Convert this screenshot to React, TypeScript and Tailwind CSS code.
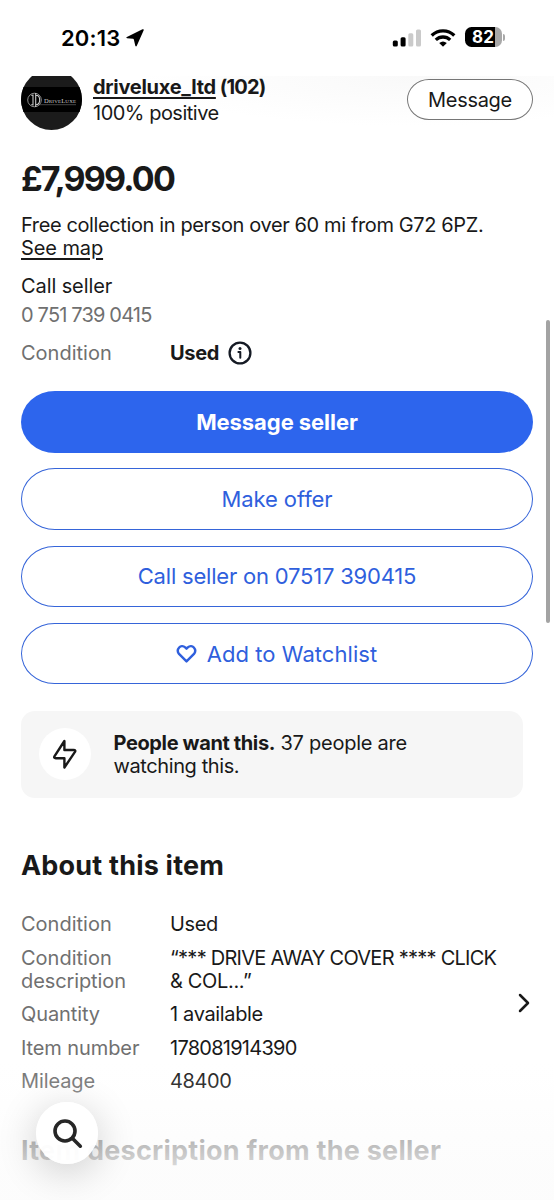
import type { ReactNode } from "react";

type Detail = {
  label: string;
  value: string;
  tracking: string;
};

const details: Detail[] = [
  { label: "Quantity", value: "1 available", tracking: "tracking-[-0.35px]" },
  { label: "Item number", value: "178081914390", tracking: "tracking-[-0.75px]" },
  { label: "Mileage", value: "48400", tracking: "tracking-[-0.4px]" },
];

function StatusBar() {
  return (
    <header className="flex h-[76px] items-start justify-between pt-[26px] pr-[49px] pl-[61px]">
      <div className="flex items-center">
        <span className="text-[22px] leading-[24px] font-semibold tracking-[0.15px] text-black">20:13</span>
        <svg className="ml-[6px] h-[18px] w-[18px]" viewBox="0 0 18 18">
          <path d="M17.7 1.2L10.8 16.8Q10 18 9.3 16.7L7.9 10.7Q7.7 10 7 9.8L1 9.2Q-.4 8.7 .9 7.9L16.5 .3Q18.1 -.2 17.7 1.2Z" fill="#000" />
        </svg>
      </div>
      <div className="flex items-center pt-px">
        <svg className="h-[19px] w-[30px]" viewBox="0 0 30 19">
          <rect x="0.8" y="12.5" width="5" height="6" rx="1.5" fill="#000" />
          <rect x="8.6" y="9.3" width="5" height="9.2" rx="1.5" fill="#000" />
          <rect x="16.3" y="5.2" width="5" height="13.3" rx="1.5" fill="#cacaca" />
          <rect x="24" y="1.5" width="5" height="17" rx="1.5" fill="#cacaca" />
        </svg>
        <svg className="ml-[8px] h-[19px] w-[26px]" viewBox="0 0 26 19" fill="none" stroke="#000" strokeWidth="3.3">
          <path d="M1.7 7.5 C8 1.3 18 1.3 24.3 7.5" />
          <path d="M5.8 11.9 C10 8 16 8 20.2 11.9" />
          <path d="M9.2 14.9 Q13 11.9 16.8 14.9 L13.5 18.2 Q13 18.6 12.5 18.2Z" fill="#000" stroke="none" />
        </svg>
        <div className="ml-[9px] flex items-center">
          <div className="flex h-[20px] w-[37px] items-center overflow-hidden rounded-[6.5px] bg-[linear-gradient(90deg,#000_30px,#a8a8a8_30px)] pl-[7px]">
            <span className="text-[17px] leading-[20px] font-bold tracking-[0.1px] text-white">82</span>
          </div>
          <span className="ml-[1px] h-[7px] w-[2px] rounded-r-full bg-[#a8a8a8]" />
        </div>
      </div>
    </header>
  );
}

function SellerAvatar() {
  return (
    <svg className="-mt-[7px] h-[61px] w-[61px] shrink-0" viewBox="0 0 61 61">
      <clipPath id="avatar">
        <circle cx="30.5" cy="30.5" r="30.5" />
      </clipPath>
      <g clipPath="url(#avatar)">
        <rect width="61" height="61" fill="#1b1b1b" />
        <rect y="18" width="61" height="25" fill="#000" />
        <g fill="none" stroke="#c9c9c9">
          <circle cx="13.5" cy="31" r="6.8" strokeWidth=".7" />
          <path d="M12 25.5V36.5M14.7 24V38M14.7 26.3C20 26.3 20 35.7 14.7 35.7M12 26.3H10.2M12 35.7H10.2" strokeWidth="1.1" />
          <path d="M18 35.7H55" strokeWidth=".5" stroke="#8a8a8a" />
        </g>
        <text x="23" y="33.6" fill="#cfcfcf" fontFamily="Liberation Serif, serif" fontSize="6.5" textLength="32">
          D<tspan fontSize="5">RIVE</tspan>L<tspan fontSize="5">UXE</tspan>
        </text>
      </g>
    </svg>
  );
}

function OutlineButton({ children }: { children: ReactNode }) {
  return (
    <button className="flex h-[61.5px] items-center justify-center rounded-[34px/31px] border-[1.4px] border-[#3665d9] pt-px text-[22px] text-[#2f5fdd]">
      {children}
    </button>
  );
}

export default function App() {
  return (
    <div className="relative h-[1200px] w-[554px] overflow-hidden bg-white font-[Inter,sans-serif] text-[20px] leading-[23px] text-[#191919]">
      <StatusBar />

      {/* seller row, scrolled partly under the status bar */}
      <section className="flex h-[84px] items-start overflow-hidden bg-[radial-gradient(ellipse_270px_50px_at_410px_0px,#f9f9f9,#fff)] pr-[21px] pl-[21px]">
        <SellerAvatar />
        <div className="ml-[11px] flex-1">
          <p className="font-bold whitespace-nowrap">
            <span className="tracking-[-0.28px] underline decoration-2 underline-offset-[3px]">driveluxe_ltd</span>
            <span className="tracking-[-0.8px]"> (102)</span>
          </p>
          <p className="mt-[3px] tracking-[-0.5px]">100% positive</p>
        </div>
        <button className="mt-[3px] flex h-[41px] w-[126px] items-center justify-center rounded-[22px/20.5px] border border-[#767676] bg-white pt-px tracking-[-0.3px]">
          Message
        </button>
      </section>

      <main className="pr-[21px] pl-[21px]">
        <h1 className="text-[34px] leading-[38px] font-bold tracking-[-1.85px]">£7,999.00</h1>
        <p className="mt-[16px] tracking-[-0.38px] whitespace-nowrap">Free collection in person over 60 mi from G72 6PZ.</p>
        <p className="tracking-[-0.1px] underline decoration-[1.5px] underline-offset-[3px]">See map</p>
        <p className="mt-[15px] tracking-[-0.1px]">Call seller</p>
        <p className="mt-[6px] tracking-[-0.83px] text-[#707070]">0 751 739 0415</p>
        <div className="mt-[15px] flex items-center">
          <span className="w-[149px] text-[#707070]">Condition</span>
          <span className="font-bold tracking-[-0.3px]">Used</span>
          <svg className="-mt-[5px] -mb-[3px] ml-[9px] h-[24px] w-[24px]" viewBox="0 0 24 24">
            <circle cx="12" cy="12" r="10.4" fill="none" stroke="#151a24" strokeWidth="2.3" />
            <circle cx="12" cy="7.6" r="1.5" fill="#151a24" />
            <path d="M10.4 11H12.3V16.8" fill="none" stroke="#151a24" strokeWidth="2" strokeLinecap="round" strokeLinejoin="round" />
          </svg>
        </div>

        <div className="mt-[26px] flex flex-col gap-[15.8px]">
          <button className="flex h-[61.5px] items-center justify-center rounded-[34px/31px] bg-[#2d65ed] pt-px text-[22px] font-bold tracking-[-0.07px] text-white">
            Message seller
          </button>
          <OutlineButton>
            <span className="tracking-[-0.1px]">Make offer</span>
          </OutlineButton>
          <OutlineButton>
            <span className="tracking-[-0.2px]">Call seller on 07517 390415</span>
          </OutlineButton>
          <OutlineButton>
            <svg className="mr-[10px] h-[20px] w-[21px]" viewBox="0 0 21 20" fill="none" stroke="#2f5fdd" strokeWidth="2.4" strokeLinejoin="round">
              <path d="M10.5 17.4 L3 9.9 C-.4 5.7 4.8 -.6 9.2 3.4 L10.5 4.7 L11.8 3.4 C16.2 -.6 21.4 5.7 18 9.9Z" />
            </svg>
            <span className="mr-px tracking-[0.05px]">Add to Watchlist</span>
          </OutlineButton>
        </div>

        <div className="mt-[26.6px] flex h-[87px] w-[502px] items-center rounded-[14px] bg-[#f6f6f6] pl-[18px]">
          <div className="flex h-[52px] w-[52px] items-center justify-center rounded-full bg-white">
            <svg className="h-[32px] w-[24px]" viewBox="0 0 24 32" fill="none" stroke="#191919" strokeWidth="2.4" strokeLinejoin="round">
              <path d="M10.8 20.2H2.8Q.4 20.2 1.6 18.2L11.4 3V12H20.6Q23.2 12 21.8 14.2L11.4 29.5V20.2Z" />
            </svg>
          </div>
          <p className="ml-[22.5px] pt-px tracking-[-0.25px]">
            <b className="tracking-[-0.37px]">People want this.</b> 37 people are
            <br />
            <span className="tracking-[-0.4px]">watching this.</span>
          </p>
        </div>

        <h2 className="mt-[51.4px] text-[27px] leading-[34px] font-bold tracking-[0.2px]">About this item</h2>

        <div className="mt-[30px] flex items-center">
          <dl className="flex w-[490px] flex-col gap-[10.5px]">
            <div className="flex">
              <dt className="w-[149px] text-[#707070]">Condition</dt>
              <dd className="tracking-[-0.4px]">Used</dd>
            </div>
            <div className="flex">
              <dt className="w-[149px] text-[#707070]">
                Condition
                <br />
                <span className="tracking-[-0.1px]">description</span>
              </dt>
              <dd className="tracking-[-0.74px] whitespace-nowrap">
                “*** DRIVE AWAY COVER **** CLICK
                <br />
                <span className="tracking-[-0.35px]">&amp; COL...”</span>
              </dd>
            </div>
            {details.map((d) => (
              <div key={d.label} className="flex">
                <dt className="w-[149px] tracking-[-0.1px] text-[#707070]">{d.label}</dt>
                <dd className={d.tracking}>{d.value}</dd>
              </div>
            ))}
          </dl>
          <svg className="ml-[6px] h-[20px] w-[14px]" viewBox="0 0 14 20" fill="none" stroke="#191919" strokeWidth="2.5" strokeLinecap="round" strokeLinejoin="round">
            <path d="M3 2L11 10L3 18" />
          </svg>
        </div>

        <h2 className="mt-[40.5px] text-[27px] leading-[34px] font-bold tracking-[0.25px] whitespace-nowrap">
          Item description from the seller
        </h2>
      </main>

      {/* bottom fade over the content */}
      <div className="absolute inset-x-0 bottom-0 h-[140px] bg-[linear-gradient(180deg,rgba(253,253,253,0),rgba(252,252,252,0.12)_25px,rgba(252,252,252,0.68)_76px,rgba(252,252,252,0.83)_105px,rgba(252,252,252,0.9))]" />

      <button className="absolute top-[1102px] left-[36px] flex h-[62px] w-[62px] items-center justify-center rounded-full bg-white/95 pt-px pl-px shadow-[0_8px_40px_rgba(0,0,0,0.2)]">
        <svg className="h-[30px] w-[30px]" viewBox="0 0 30 30" fill="none" stroke="#262626" strokeWidth="3.6" strokeLinecap="round">
          <circle cx="12" cy="12" r="10" />
          <path d="M19.3 19.3L27.3 27.2" />
        </svg>
      </button>

      {/* scroll thumb */}
      <div className="absolute top-[320px] left-[546px] h-[303px] w-[4px] rounded-full bg-[#a3a3a3]" />
    </div>
  );
}
